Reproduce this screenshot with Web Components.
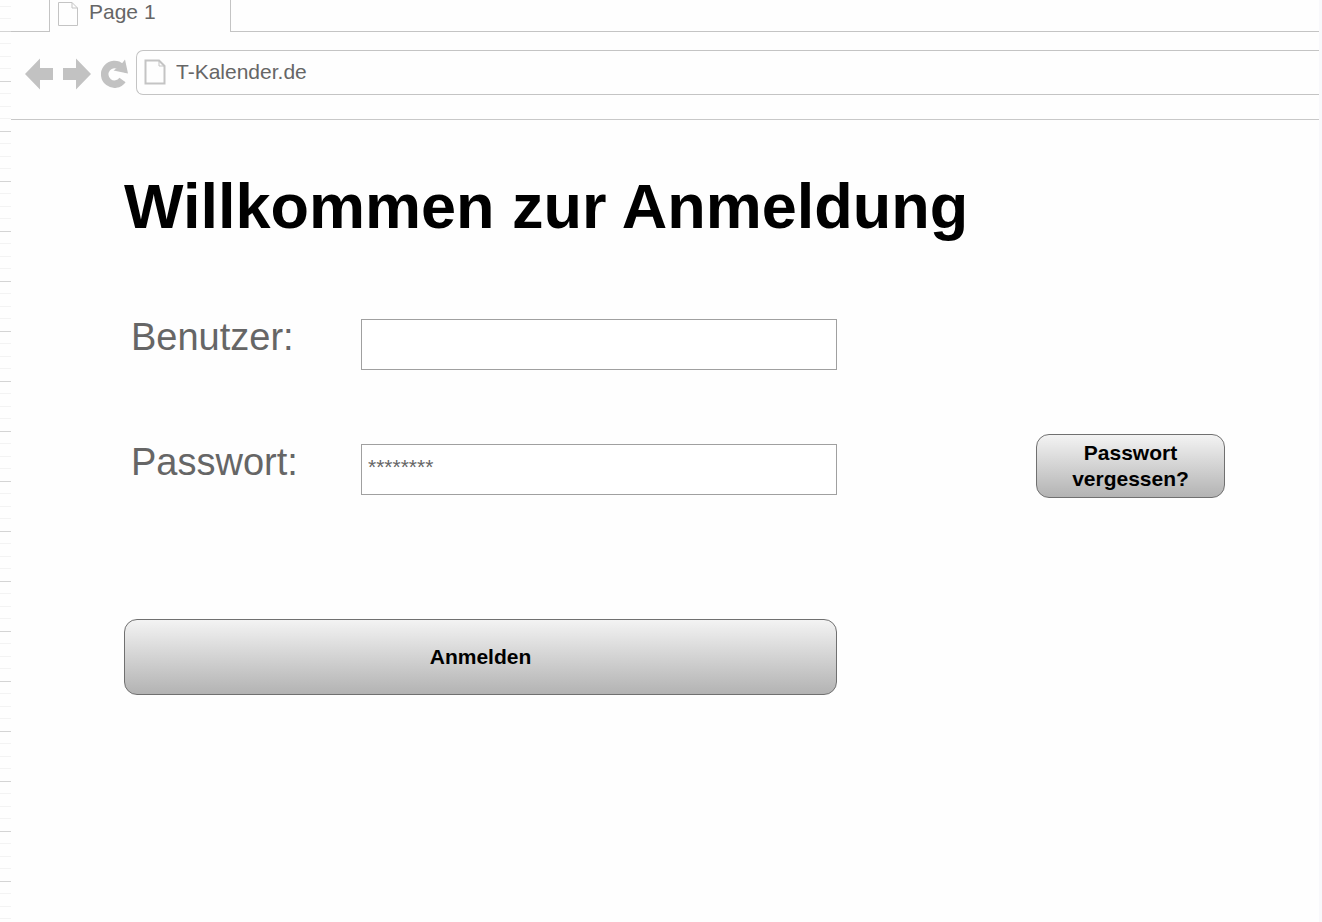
<!DOCTYPE html>
<html lang="de">
<head>
<meta charset="utf-8">
<meta name="viewport" content="width=device-width, initial-scale=1">
<title>T-Kalender.de</title>
<style>
  body { margin: 0; font-family: "Liberation Sans", Arial, sans-serif; color: #666; background: #fefefe; }
</style>
</head>
<body>
<browser-frame>
  <page-tab slot="tab">Page 1</page-tab>
  <nav-bar slot="toolbar" address="T-Kalender.de"></nav-bar>
  <login-form heading="Willkommen zur Anmeldung">
    <form-field name="user">Benutzer:</form-field>
    <form-field name="password" value="********">Passwort:</form-field>
    <soft-button slot="submit">Anmelden</soft-button>
    <soft-button slot="help">Passwort vergessen?</soft-button>
  </login-form>
</browser-frame>

<script>
const define = (name, html, setup) => {
  const template = document.createElement('template');
  template.innerHTML = html;
  customElements.define(name, class extends HTMLElement {
    constructor() {
      super();
      this.attachShadow({ mode: 'open' }).append(template.content.cloneNode(true));
    }
    connectedCallback() {
      if (setup) setup(this, this.shadowRoot);
    }
  });
};

// Window: canvas grid visible on the left, tab strip, toolbar, page content
define('browser-frame', `
  <style>
    :host {
      display: block; box-sizing: border-box; min-height: 100vh; padding: 0 3px 0 11px;
      background:
        linear-gradient(#f8f8fb, #f8f8fb) right / 3px 100% no-repeat,
        repeating-linear-gradient(#0000 0 31px, #d4d4d4 31px 32px, #0000 32px 50px) left / 11px 100% no-repeat,
        repeating-linear-gradient(#0000 0 6px, #f3f3f3 6px 7px, #0000 7px 18px, #f3f3f3 18px 19px, #0000 19px 43px, #f3f3f3 43px 44px, #0000 44px 50px) left / 11px 100% no-repeat,
        #fefefe;
    }
    .tabs { display: flex; height: 32px; }
    .tabs::before, .tabs::after { content: ""; box-sizing: border-box; border-bottom: 1px solid #c4c4c4; }
    .tabs::before { width: 38px; }
    .tabs::after { flex: 1; }
  </style>
  <div class="tabs"><slot name="tab"></slot></div>
  <slot name="toolbar"></slot>
  <slot></slot>
`);

define('page-icon', `
  <style>
    :host { display: block; color: #c4c4c4; }
    svg { display: block; }
    path { fill: none; stroke: currentColor; stroke-width: var(--icon-stroke, 1px); }
    .fold { stroke-width: 1px; }
  </style>
  <svg width="22" height="28" viewBox="0 0 22 28" aria-hidden="true">
    <path d="M1.5 2.500H15L20.5 8V25.500H1.500Z"/>
    <path class="fold" d="M15 2.500V8H20.500"/>
  </svg>
`);

define('page-tab', `
  <style>
    :host {
      display: flex; box-sizing: border-box; width: 182px; padding: 0 7px;
      border: solid #c4c4c4; border-width: 0 1px;
    }
    a { display: flex; align-items: flex-start; gap: 10px; color: #666; font-size: 21px; line-height: 24px; text-decoration: none; }
  </style>
  <a href="#"><page-icon></page-icon><span><slot></slot></span></a>
`);

define('nav-bar', `
  <style>
    :host { display: flex; align-items: center; padding: 18px 0 24px 13px; border-bottom: 1px solid #c8c8c8; }
    .nav { display: flex; gap: 8px; padding-top: 2px; margin-right: 8px; }
    button { padding: 0; border: 0; background: none; color: #c2c2c2; }
    svg { display: block; }
    .address {
      flex: 1; display: flex; align-items: center; gap: 10px; box-sizing: border-box;
      height: 45px; padding: 0 0 2px 7px; border: 1px solid #c4c4c4; border-right: 0; border-radius: 7px 0 0 7px;
    }
    page-icon { --icon-stroke: 2px; }
    input {
      flex: 1; min-width: 0; height: 24px; padding: 0; border: 0; outline: 0; background: none;
      font: 21px/24px "Liberation Sans", Arial, sans-serif; color: #666;
    }
  </style>
  <div class="nav">
    <button type="button" aria-label="Zurück">
      <svg width="30" height="32" viewBox="0 0 30 32"><path fill="currentColor" d="M1 16 16 .5V10H29V22H16V31.500Z"/></svg>
    </button>
    <button type="button" aria-label="Vorwärts">
      <svg width="30" height="32" viewBox="0 0 30 32"><path fill="currentColor" d="M29 16 14 .5V10H1V22H14V31.500Z"/></svg>
    </button>
    <button type="button" aria-label="Neu laden">
      <svg width="28" height="32" viewBox="0 0 28 32">
        <path fill="none" stroke="currentColor" stroke-width="7.500" d="M21 9A9.800 9.800 0 1 0 22.500 22"/>
        <path fill="currentColor" d="M25 1.500 28 15.500 13.500 12.500 20 8Z"/>
      </svg>
    </button>
  </div>
  <div class="address">
    <page-icon></page-icon>
    <input type="text" aria-label="Adresse">
  </div>
`, (host, root) => { root.querySelector('input').value = host.getAttribute('address'); });

define('form-field', `
  <style>
    :host { display: grid; grid-template-columns: 230px minmax(0, 1fr); padding-left: 7px; }
    label { font-size: 38px; line-height: 36px; }
    input {
      box-sizing: border-box; width: 100%; height: 51px; padding: 0 6px 6px; margin: 0;
      border: 1px solid #a0a0a0; border-radius: 0; outline: 0; background: #fff;
      font: 21px "Liberation Sans", Arial, sans-serif; color: #666;
    }
  </style>
  <label for="control"><slot></slot></label>
  <input id="control" type="text">
`, (host, root) => {
  const input = root.querySelector('input');
  input.name = host.getAttribute('name');
  input.value = host.getAttribute('value') || '';
});

define('soft-button', `
  <style>
    :host { display: block; }
    button {
      display: block; box-sizing: border-box; width: 100%; min-height: var(--button-height, 64px); margin: 0; padding: 0 24px;
      border: 1px solid #707070; border-radius: 13px;
      background: linear-gradient(#f4f4f4, #b2b2b2) border-box;
      font: bold 21px/26px "Liberation Sans", Arial, sans-serif; color: #000;
    }
  </style>
  <button type="button"><slot></slot></button>
`);

define('login-form', `
  <style>
    :host { display: block; padding: 50px 94px 48px 113px; }
    h1 { margin: 0 0 77px; color: #000; font-size: 63px; line-height: 72px; }
    form { display: grid; grid-template-columns: minmax(0, 713px) 189px; justify-content: space-between; }
    .fields { display: flex; flex-direction: column; gap: 74px; }
    .submit { margin-top: 124px; --button-height: 76px; }
    .help { padding-top: 115px; }
  </style>
  <h1></h1>
  <form>
    <div>
      <div class="fields"><slot></slot></div>
      <div class="submit"><slot name="submit"></slot></div>
    </div>
    <div class="help"><slot name="help"></slot></div>
  </form>
`, (host, root) => { root.querySelector('h1').textContent = host.getAttribute('heading'); });
</script>
</body>
</html>
